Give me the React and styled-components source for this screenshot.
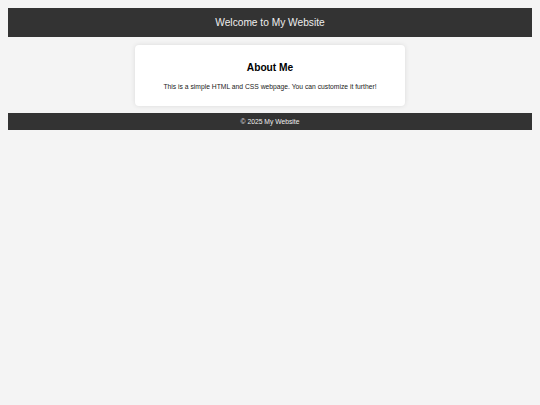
import React from "react";
import styled, { createGlobalStyle } from "styled-components";

const GlobalStyle = createGlobalStyle`
  html, body {
    margin: 0;
    padding: 0;
    background: #f4f4f4;
  }
  body {
    margin: 8px;
    font-family: "Liberation Sans", Arial, Helvetica, sans-serif;
  }
`;

const Header = styled.header`
  background: #333333;
  color: #eeeeee;
  padding: 8px;
  text-align: center;
  font-size: 10.2px;
  line-height: 13px;
`;

const Main = styled.main`
  display: flex;
  justify-content: center;
  padding-top: 8px;
`;

const Card = styled.section`
  width: 270px;
  box-sizing: border-box;
  background: #ffffff;
  border-radius: 4px;
  box-shadow: 0 0 5px rgba(0, 0, 0, 0.1);
  padding: 17px 10px 15px;
  text-align: center;
`;

const Title = styled.h2`
  margin: 0;
  font-size: 10.2px;
  line-height: 12px;
  font-weight: bold;
  color: #000;
`;

const Text = styled.p`
  margin: 8px 0 0;
  font-size: 6.75px;
  line-height: 9px;
  color: #222;
`;

const Footer = styled.footer`
  margin-top: 7px;
  background: #333333;
  color: #eeeeee;
  text-align: center;
  padding: 4px;
  font-size: 6.75px;
  line-height: 9px;
`;

export default function App() {
  return (
    <>
      <GlobalStyle />
      <Header>Welcome to My Website</Header>
      <Main>
        <Card>
          <Title>About Me</Title>
          <Text>This is a simple HTML and CSS webpage. You can customize it further!</Text>
        </Card>
      </Main>
      <Footer>© 2025 My Website</Footer>
    </>
  );
}
